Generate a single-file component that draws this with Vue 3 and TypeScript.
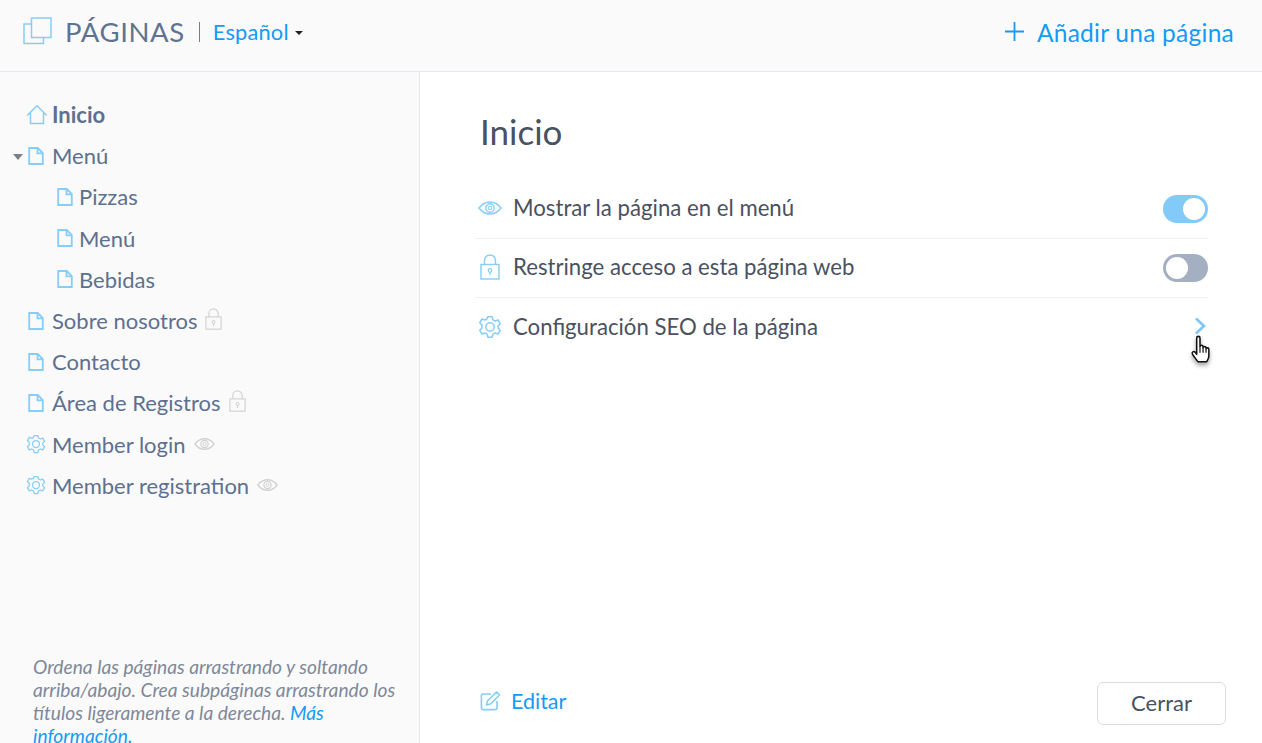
<script setup lang="ts">
interface PageItem {
  label: string
  icon: 'home' | 'page' | 'gear'
  sub?: boolean
  bold?: boolean
  caret?: boolean
  badge?: 'lock' | 'eye'
}
const pages: PageItem[] = [
  { label: 'Inicio', icon: 'home', bold: true },
  { label: 'Menú', icon: 'page', caret: true },
  { label: 'Pizzas', icon: 'page', sub: true },
  { label: 'Menú', icon: 'page', sub: true },
  { label: 'Bebidas', icon: 'page', sub: true },
  { label: 'Sobre nosotros', icon: 'page', badge: 'lock' },
  { label: 'Contacto', icon: 'page' },
  { label: 'Área de Registros', icon: 'page', badge: 'lock' },
  { label: 'Member login', icon: 'gear', badge: 'eye' },
  { label: 'Member registration', icon: 'gear', badge: 'eye' },
]
</script>

<template>
  <div class="app">
    <svg class="sprite" aria-hidden="true">
      <symbol id="i-home" viewBox="0 0 22 22"><path d="M1.2 11.5 11 1.8l9.8 9.7M4.5 9v10.5h13V9" fill="none" stroke="currentColor" stroke-width="1.5" /></symbol>
      <symbol id="i-page" viewBox="0 0 16 18"><path d="M1.2 1h8.6l5 5v11h-13.600zM9.500 1v5.300h5.300" fill="none" stroke="currentColor" stroke-width="1.800" /></symbol>
      <symbol id="i-gear" viewBox="0 0 24 24"><path d="M9.800 1.800h4.400l.7 3 2.300 1.200 2.900-1 2.200 3.800-2.200 2.100v2.200l2.200 2.100-2.200 3.800-2.900-1-2.300 1.200-.7 3H9.800l-.7-3-2.300-1.200-2.900 1-2.200-3.800 2.200-2.100V9.900L1.700 7.800l2.200-3.800 2.900 1 2.300-1.200z" fill="none" stroke="currentColor" stroke-width="1.500" stroke-linejoin="round" /><circle cx="12" cy="12" r="4.200" fill="none" stroke="currentColor" stroke-width="1.500" /></symbol>
      <symbol id="i-lock" viewBox="0 0 20 26"><path d="M4.500 10.500V6.500a5.500 5.500 0 0 1 11 0v4" fill="none" stroke="currentColor" stroke-width="1.400" /><rect x="1" y="10.500" width="18" height="14.500" fill="none" stroke="currentColor" stroke-width="1.400" /><circle cx="10" cy="16.500" r="1.800" fill="none" stroke="currentColor" stroke-width="1.200" /><path d="M10 18.300v3" stroke="currentColor" stroke-width="1.200" /></symbol>
      <symbol id="i-eye" viewBox="0 0 24 16"><path d="M1 8c3-4 7-6 11-6s8 2 11 6c-3 4-7 6-11 6S4 12 1 8z" fill="none" stroke="currentColor" stroke-width="1.500" /><circle cx="12" cy="8" r="4.200" fill="none" stroke="currentColor" stroke-width="1.400" /><circle cx="12" cy="8" r="1.800" fill="none" stroke="currentColor" stroke-width="1.100" /></symbol>
    </svg>

    <header class="topbar">
      <div class="brand">
        <svg class="logo" width="29" height="28" viewBox="0 0 29 28" aria-hidden="true">
          <path d="M8.500 1h19.500v19.500H8.500z" fill="none" stroke="#86cdf8" stroke-width="1.500" />
          <path d="M8 7H1v19.500h19.500v-5.500" fill="none" stroke="#86cdf8" stroke-width="1.500" />
        </svg>
        <span class="brand-title">PÁGINAS</span>
        <span class="brand-sep"></span>
        <span class="lang">Español</span>
        <span class="lang-caret"></span>
      </div>
      <a class="add-page">
        <svg width="21" height="21" viewBox="0 0 21 21" aria-hidden="true">
          <path d="M10.500 1v19M1 10.500h19" stroke="#139bf5" stroke-width="1.800" fill="none" />
        </svg>
        <span class="add-label">Añadir una página</span>
      </a>
    </header>

    <div class="body">
      <aside class="sidebar">
        <ul class="tree">
          <li v-for="(p, i) in pages" :key="i" class="tree-row" :class="{ sub: p.sub, bold: p.bold }">
            <span v-if="p.caret" class="tree-caret"></span>
            <svg class="tree-icon" :class="'ic-' + p.icon" aria-hidden="true"><use :href="'#i-' + p.icon" /></svg>
            <span class="tree-label">{{ p.label }}</span>
            <svg v-if="p.badge" class="tree-badge" :class="'bd-' + p.badge" aria-hidden="true"><use :href="'#i-' + p.badge" /></svg>
          </li>
        </ul>
        <p class="help">
          Ordena las páginas arrastrando y soltando arriba/abajo. Crea subpáginas arrastrando los títulos ligeramente a la derecha.
          <a>Más información.</a>
        </p>
      </aside>

      <main class="detail">
        <h1 class="detail-title">Inicio</h1>
        <div class="settings">
          <div class="setting">
            <svg class="set-icon eye" aria-hidden="true"><use href="#i-eye" /></svg>
            <span class="set-label">Mostrar la página en el menú</span>
            <span class="toggle on"><i></i></span>
          </div>
          <div class="setting">
            <svg class="set-icon lock" aria-hidden="true"><use href="#i-lock" /></svg>
            <span class="set-label">Restringe acceso a esta página web</span>
            <span class="toggle"><i></i></span>
          </div>
          <div class="setting">
            <svg class="set-icon gear" aria-hidden="true"><use href="#i-gear" /></svg>
            <span class="set-label">Configuración SEO de la página</span>
            <svg class="chevron" width="13" height="18" viewBox="0 0 13 18" aria-hidden="true">
              <path d="M2 1.500 10 9l-8 7.500" fill="none" stroke="#7cc8f7" stroke-width="2.700" />
            </svg>
            <svg class="cursor" width="26" height="33" viewBox="0 0 22 28" aria-hidden="true">
              <path d="M6.500 2.600c0-1.900 2.800-1.900 2.800 0v7.200c0-1.400 2.600-1.400 2.600 0v1c0-1.300 2.500-1.300 2.500 0v1c0-1.200 2.400-1.200 2.400.2v5.800c0 2.300-1 3.400-1.800 4.900H7.500c-1-2-3.200-3.800-4.600-6.400-1-1.900 1.200-3 2.300-1.600l1.300 1.700z" fill="#fff" stroke="#111" stroke-width="1.300" stroke-linejoin="round" />
              <path d="M9.300 10v5M11.900 11v4M14.400 12v3" stroke="#111" stroke-width="1" fill="none" />
            </svg>
          </div>
        </div>
        <footer class="detail-foot">
          <a class="edit">
            <svg width="21" height="21" viewBox="0 0 21 21" aria-hidden="true">
              <path d="M17 11v7a1.600 1.600 0 0 1-1.600 1.600H3A1.600 1.600 0 0 1 1.400 18V5.600A1.600 1.600 0 0 1 3 4h8" fill="none" stroke="#86cdf8" stroke-width="1.600" />
              <path d="M6.500 15l1-4L16.500 2l3 3-9 9z" fill="none" stroke="#86cdf8" stroke-width="1.600" stroke-linejoin="round" />
            </svg>
            <span>Editar</span>
          </a>
          <button class="close" type="button">Cerrar</button>
        </footer>
      </main>
    </div>
  </div>
</template>

<style>
html, body { margin: 0; height: 100%; overflow: hidden; background: #fff; }
</style>

<style scoped>
.app {
  width: 1262px;
  height: 743px;
  overflow: hidden;
  display: flex;
  flex-direction: column;
  font-family: Lato, "Open Sans", sans-serif;
  color: #4a5160;
}
.sprite { display: none; }

.topbar {
  height: 63px;
  flex: none;
  box-sizing: content-box;
  border-bottom: 1px solid #e2e8ee;
  background: #fafafa;
  display: flex;
  align-items: center;
  justify-content: space-between;
  padding: 0 28px 8px 23px;
}
.brand { display: flex; align-items: center; }
.logo { margin: -2px 13px 0 0; }
.brand-title { font-size: 27.500px; color: #5f7391; letter-spacing: 0.600px; line-height: 30px; }
.brand-sep { width: 1px; height: 20px; background: #6d7f99; margin: 0 13px 0 14px; }
.lang { font-size: 21.800px; color: #139bf5; letter-spacing: 0.200px; }
.lang-caret {
  margin: 3px 0 0 6px;
  border-left: 4px solid transparent;
  border-right: 4px solid transparent;
  border-top: 4px solid #222;
}
.add-page { display: flex; align-items: center; gap: 12px; color: #139bf5; font-size: 24.500px; letter-spacing: 0.250px; }
.add-label { padding-top: 2px; }

.body { flex: 1; display: flex; min-height: 0; }

.sidebar {
  width: 419px;
  flex: none;
  border-right: 1px solid #e8e8e8;
  background: #fafafa;
  display: flex;
  flex-direction: column;
  justify-content: space-between;
  position: relative;
  overflow: hidden;
}
.tree { list-style: none; margin: 0; padding: 22px 0 0 26px; }
.tree-row {
  height: 41.200px;
  display: flex;
  align-items: center;
  position: relative;
  font-size: 22px;
  color: #5d7090;
}
.tree-row.sub { padding-left: 29px; }
.tree-row.bold .tree-label { font-weight: 700; }
.tree-caret {
  position: absolute;
  left: -13px;
  top: 19px;
  border-left: 5.500px solid transparent;
  border-right: 5.500px solid transparent;
  border-top: 6px solid #7b7f88;
}
.tree-icon { width: 16px; height: 18px; margin: 0 8px 0 2px; color: #86cdf8; flex: none; }
.tree-row.sub .tree-icon { margin-right: 6px; }
.tree-icon.ic-home { width: 22px; height: 22px; margin: 0 4px 0 0; }
.tree-icon.ic-gear { width: 20px; height: 20px; margin: 0 6px 0 0; }
.tree-badge { color: #d2d2d2; margin-left: 8px; flex: none; }
.bd-lock { width: 17px; height: 22px; margin-top: -4px; }
.bd-eye { width: 21px; height: 14px; }

.help {
  margin: 0 0 -4px;
  padding: 0 18px 0 33px;
  font-size: 19.200px;
  line-height: 23px;
  font-style: italic;
  color: #7f8899;
}
.help a { color: #139bf5; }

.detail {
  flex: 1;
  padding: 0 54px 0 60px;
  display: flex;
  flex-direction: column;
  position: relative;
  background: #fff;
}
.detail-title { margin: 37px 0 0; font-size: 35px; font-weight: 400; line-height: 44px; color: #4a5160; }
.settings { margin: 27px 0 0 -5px; }
.setting {
  height: 59px;
  box-sizing: border-box;
  display: flex;
  align-items: center;
  border-bottom: 1px solid #f1f1f1;
  position: relative;
  font-size: 22.200px;
}
.setting:last-child { border-bottom: none; }
.set-icon { color: #86cdf8; width: 24px; height: 24px; margin: -2px 11px 0 3px; flex: none; }
.set-icon.eye { height: 16px; }
.set-icon.lock { width: 20px; height: 26px; margin: -2px 13px 0 5px; }
.set-label { flex: 1; padding-bottom: 3px; }

.toggle {
  width: 45px;
  height: 28px;
  border-radius: 14px;
  background: #a4afc2;
  display: flex;
  align-items: center;
  padding: 0 3px;
  box-sizing: border-box;
}
.toggle i { width: 22px; height: 22px; border-radius: 50%; background: #fff; display: block; }
.toggle.on { background: #82cbf8; justify-content: flex-end; }
.chevron { margin: -4px 1px 0 0; }
.cursor { position: absolute; right: -7px; top: 37px; filter: drop-shadow(0 3px 2px rgba(0,0,0,.35)); }

.detail-foot {
  margin: auto -18px 18px 0;
  display: flex;
  align-items: center;
  justify-content: space-between;
}
.edit { display: flex; align-items: center; gap: 10px; color: #139bf5; font-size: 21.500px; padding-bottom: 6px; }
.close {
  width: 129px;
  height: 43px;
  border: 1px solid #d9dde0;
  border-radius: 6px;
  background: #fff;
  font: inherit;
  font-size: 22px;
  color: #4a5160;
  padding: 0 0 3px;
}
</style>
